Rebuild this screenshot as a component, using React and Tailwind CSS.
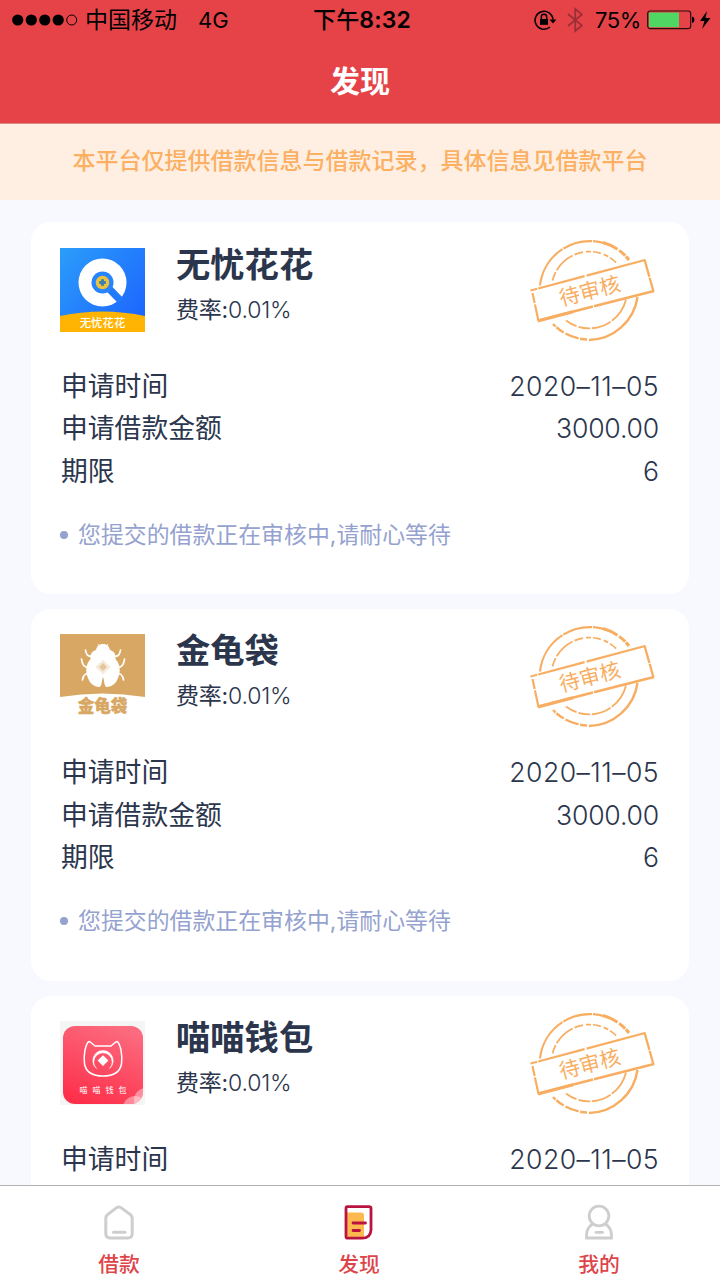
import React from 'react';

const WuyouLogo = () => (
  <svg viewBox="0 0 85 84" className="w-[85px] h-[84px]">
    <defs>
      <linearGradient id="wuyou" x1="0" y1="0" x2="1" y2="0.8">
        <stop offset="0" stopColor="#2b9dfb" />
        <stop offset="1" stopColor="#1d66fd" />
      </linearGradient>
    </defs>
    <rect width="85" height="84" fill="url(#wuyou)" />
    <circle cx="42.5" cy="34.5" r="24" fill="#fff" />
    <path d="M43 34.5 L61 53" stroke="#2379fc" strokeWidth="7.4" />
    <circle cx="42.5" cy="34.5" r="11" fill="#2784fc" />
    <circle cx="42.5" cy="34.5" r="6.8" fill="#ebc23c" />
    <path d="M42.5 31.2v6.6M39.2 34.5h6.6" stroke="#3f7fae" strokeWidth="3" />
    <path d="M0 68 Q42.5 59 85 68 V84 H0Z" fill="#ffb302" />
    <text x="42.5" y="78.5" textAnchor="middle" fontSize="11.4" fontWeight="500" fill="#fff">无忧花花</text>
  </svg>
);

const JinguiLogo = () => (
  <svg viewBox="0 0 85 84" className="w-[85px] h-[84px]">
    <path d="M0 0H85V63Q42.5 56 0 63Z" fill="#d7a763" />
    <g fill="none" stroke="#fff" strokeWidth="1.7" strokeLinecap="round">
      <path d="M31 22C28 23 26 20 25.5 16M29 33C24 34 22 30 21.5 25M30 39C25 39 23 42 22.5 46" />
      <path d="M55 22C58 23 60 20 60.5 16M57 33C62 34 64 30 64.5 25M56 39C61 39 63 42 63.5 46" />
      <path d="M40 12l-2-1.5M46 12l2-1.5" strokeWidth="1" />
    </g>
    <path d="M43 10C47 10 49 12 50 16C54 17 56 20 55.5 25C60 30 61 37 58 44C56 50 51 53 46.5 53C44 52 44.5 47 43 43C41.5 47 42 52 39.5 53C35 53 30 50 28 44C25 37 26 30 30.5 25C30 20 32 17 36 16C37 12 39 10 43 10Z" fill="#fff" />
    <path d="M43 25.5l7.5 7.5-7.5 7.5-7.5-7.5z" fill="#f5eadb" />
    <path d="M43 29l4 4-4 4-4-4z" fill="#e5c79b" />
    <text x="42.5" y="78" textAnchor="middle" fontSize="16.5" fontWeight="900" fill="#d7a763" stroke="#d7a763" strokeWidth="0.4">金龟袋</text>
  </svg>
);

const MiaoLogo = () => (
  <svg viewBox="0 0 85 84" className="w-[85px] h-[84px]">
    <defs>
      <linearGradient id="miao" x1="0.7" y1="0" x2="0.3" y2="1">
        <stop offset="0" stopColor="#fc6b7f" />
        <stop offset="1" stopColor="#fd304b" />
      </linearGradient>
      <clipPath id="miaoClip">
        <rect x="3" y="5" width="80" height="78" rx="12" />
      </clipPath>
    </defs>
    <rect width="85" height="84" fill="#f5f5f5" />
    <g clipPath="url(#miaoClip)">
      <rect x="3" y="5" width="80" height="78" fill="url(#miao)" />
      <circle cx="75" cy="87" r="12" fill="#fff" opacity="0.4" />
      <circle cx="86" cy="79" r="12" fill="#fff" opacity="0.4" />
    </g>
    <path d="M25 29C26 25 27 21 29 20.5C31 21 33 23.5 35 25H51C53 23.5 55 21 57 20.5C59 21 60 25 61 29C62 34 62 39 61.5 43C60 51 54 55 43 55C32 55 26 51 24.5 43C24 39 24 34 25 29Z" fill="none" stroke="#fff" strokeWidth="1.5" />
    <path d="M36.5 47.5A10.2 10.2 0 1 1 49.5 47.5A9.2 9.2 0 1 0 36.5 47.5Z" fill="#fff" stroke="#fff" strokeWidth="0.5" />
    <path d="M43 34.2l5.4 5.4-5.4 5.4-5.4-5.4z" fill="#fff" />
    <text x="43.5" y="71.5" textAnchor="middle" fontSize="8" letterSpacing="5" dx="2" fill="#fff">喵喵钱包</text>
  </svg>
);

const Stamp = () => (
  <svg viewBox="0 0 130 110" className="w-[130px] h-[110px]" fill="none" stroke="#f8ae62">
    <path d="M11 49.5A50 50 0 0 1 76 7.5" strokeWidth="2.2" strokeDasharray="44 1 30 1 40" />
    <path d="M74 6.5A50 50 0 0 1 100 24" strokeWidth="3" strokeDasharray="16 2 8 1 20" />
    <path d="M108.500 61A50 50 0 0 1 60 104" strokeWidth="2.4" />
    <path d="M58 103.5A50 50 0 0 1 24 88" strokeWidth="2.4" strokeDasharray="7 1.500 14 2 9 1" />
    <path d="M23.5 44.5A38 38 0 0 1 55 16" strokeWidth="1.8" strokeDasharray="9 2 22 2" />
    <path d="M57 15.7A38 38 0 0 1 88 27.5" strokeWidth="1.7" strokeDasharray="5 2 8 3" />
    <path d="M97 63.5A38 38 0 0 1 37 84.5" strokeWidth="1.8" strokeDasharray="26 1.5 20 1.5 12 2" />
    <path d="M1.5 54.5L116 24" strokeWidth="2.2" strokeDasharray="7 1 48 2 70" />
    <path d="M115.5 23.5L124.5 55.5" strokeWidth="2.3" strokeDasharray="18 1 20" />
    <path d="M125 55L9.5 84.5" strokeWidth="2.6" strokeDasharray="62 1 90" />
    <path d="M9.5 85L3.5 57" strokeWidth="2.2" strokeDasharray="17 1.5 16" />
    <path d="M9 85L44 75.7" strokeWidth="3.2" />
    <text x="60.8" y="62.3" transform="rotate(-14.5 60.8 55)" textAnchor="middle" fontSize="20.8" fill="#f8ae62" stroke="none">待审核</text>
  </svg>
);

const HomeIcon = () => (
  <svg viewBox="0 0 36 40" className="w-9 h-10" fill="none" stroke="#cecece" strokeWidth="3" strokeLinejoin="round">
    <path d="M16 4.4Q17.8 3.4 19.6 4.4L29.5 11.6Q31.2 13 31.2 15.6V30.6Q31.2 35 27 35H9Q4.8 35 4.8 30.6V15.6Q4.8 13 6.5 11.6Z" />
    <path d="M12.5 29.3H24" strokeLinecap="round" />
  </svg>
);

const DiscoverIcon = () => (
  <svg viewBox="0 0 36 40" className="w-9 h-10" fill="none" stroke="#b9143f" strokeWidth="2.8" strokeLinejoin="round">
    <path d="M6 9.5H20Q23 9.5 23 12.5V35H6Z" fill="#fbb950" stroke="none" />
    <path d="M6.5 3.7H28Q30 3.7 30 5.5V27Q29.5 35.2 21 35.2H6.5Q5 35.2 5 33.5V5.5Q5 3.7 6.5 3.7Z" />
    <path d="M12 20H24.5M12 27.5H18.5" strokeLinecap="round" />
  </svg>
);

const MineIcon = () => (
  <svg viewBox="0 0 36 40" className="w-9 h-10" fill="none" stroke="#cecece" strokeWidth="2.8">
    <circle cx="18" cy="13" r="9.8" />
    <path d="M11.5 21Q5.5 25 5.5 32.5V35H30.5V32.5Q30.5 25 24.5 21" />
    <path d="M15 29.3H21.5" strokeLinecap="round" />
  </svg>
);

const loans = [
  { name: '无忧花花', logo: WuyouLogo },
  { name: '金龟袋', logo: JinguiLogo },
  { name: '喵喵钱包', logo: MiaoLogo }
];

const rows = [
  { label: '申请时间', value: '2020–11–05', spacing: 'tracking-[0.45px]' },
  { label: '申请借款金额', value: '3000.00', spacing: 'tracking-[-0.2px]' },
  { label: '期限', value: '6', spacing: '' }
];

const tabs = [
  { label: '借款', icon: HomeIcon },
  { label: '发现', icon: DiscoverIcon },
  { label: '我的', icon: MineIcon }
];

const StatusBar = () => (
  <div className="grid grid-cols-[1fr_auto_1fr] items-center h-10 pl-3 pr-2 text-black text-[23px] leading-10">
    <div className="flex items-center">
      <svg viewBox="0 0 66 12" className="w-[66px] h-3">
        <circle cx="5.7" cy="6" r="5.6" />
        <circle cx="19.3" cy="6" r="5.6" />
        <circle cx="32.8" cy="6" r="5.6" />
        <circle cx="46.2" cy="6" r="5.6" />
        <circle cx="59.7" cy="6" r="5" fill="none" stroke="#000" />
      </svg>
      <span className="ml-[7px]">中国移动</span>
      <span className="ml-[21px] text-[22px]">4G</span>
    </div>
    <div className="font-semibold tracking-[0.15px] pl-px pr-px">
      <span className="font-medium">下午</span>8:32
    </div>
    <div className="flex items-center justify-end">
      <svg viewBox="0 0 24 22" className="w-6 h-[22px] mr-2.5" fill="none" stroke="#000" strokeWidth="1.5">
        <path d="M17 18A9 9 0 1 1 20 10.5" />
        <path d="M16.5 10.5H23.5L20 14.5Z" fill="#000" stroke="none" />
        <rect x="7" y="10" width="8" height="5.8" fill="#000" stroke="none" />
        <path d="M8.3 10V8A2.7 2.7 0 0 1 13.7 8V10" />
      </svg>
      <svg viewBox="0 0 16 26" className="w-4 h-[26px] mr-[12px]" fill="none" stroke="#9b2f36" strokeWidth="1.8">
        <path d="M1 7L15 18.5L8.2 24V2L15 7.5L1 19" />
      </svg>
      <span className="text-[22px] tracking-[-0.4px] mr-1.5">75%</span>
      <svg viewBox="0 0 65 22" className="w-[65px] h-[22px]">
        <rect x="0.7" y="2" width="43" height="17.6" rx="2.5" fill="none" stroke="#2c0b0d" strokeWidth="1.2" />
        <rect x="2" y="3.5" width="30" height="14.7" fill="#50d763" />
        <path d="M45 7.5Q47.5 8 47.5 10.8T45 14Z" />
        <path d="M60 2L53 12H57.5L55 20L63.5 9H58.5Z" />
      </svg>
    </div>
  </div>
);

const LoanCard = ({ loan }) => {
  const Logo = loan.logo;
  return (
    <div className="h-[372px] shrink-0 bg-white rounded-[20px] pl-[29px] pr-[30px] pt-[25.5px]">
      <div className="flex h-[117px]">
        <Logo />
        <div className="ml-[31px] -mt-2 flex-1 text-[#2b364d]">
          <h2 className="text-[34.3px] leading-[50px] font-bold">{loan.name}</h2>
          <p className="text-[23px] leading-10 tracking-[-0.2px]">
            费率:<span className="font-[350]">0.01%</span>
          </p>
        </div>
        <div className="-mt-[12px]">
          <Stamp />
        </div>
      </div>
      <div className="text-[26.6px] leading-[42.5px] text-[#2b364d]">
        {rows.map((row) => (
          <div key={row.label} className="flex justify-between">
            <span className="text-[26.8px] pl-px">{row.label}</span>
            <span className={`font-[350] ${row.spacing}`}>{row.value}</span>
          </div>
        ))}
      </div>
      <div className="mt-[22.5px] flex items-center text-[22.9px] leading-10 text-[#95a2cf]">
        <span className="w-2 h-2 rounded-full bg-[#95a2cf] mr-2.5" />
        您提交的借款正在审核中,请耐心等待
      </div>
    </div>
  );
};

const App = () => {
  return (
    <div className="w-[720px] h-[1280px] flex flex-col overflow-hidden bg-[#f8f9fe] font-[Inter,'Noto_Sans_CJK_SC',sans-serif]">
      <header className="h-[124px] shrink-0 bg-[#e64349] border-b border-[#dc8a86]">
        <StatusBar />
        <h1 className="text-center text-white text-[30px] leading-[83px] font-bold">发现</h1>
      </header>
      <div className="h-[75.5px] shrink-0 bg-[#ffefe2] text-center text-[23px] leading-[75px] font-medium text-[#fbb063]">
        本平台仅提供借款信息与借款记录，具体信息见借款平台
      </div>

      <main className="flex-1 min-h-0 overflow-hidden flex flex-col gap-[14.8px] px-[31px] pt-[22.5px]">
        {loans.map((loan) => (
          <LoanCard key={loan.name} loan={loan} />
        ))}
      </main>

      <nav className="h-[95px] shrink-0 bg-white border-t border-[#b2b2b2]">
        <div className="w-[720px] -ml-px grid grid-cols-3">
          {tabs.map((tab) => {
            const Icon = tab.icon;
            return (
              <div key={tab.label} className="flex flex-col items-center pt-[17px] text-[#de4449]">
                <Icon />
                <span className="mt-[7px] text-[20.8px] leading-[30px] font-medium">{tab.label}</span>
              </div>
            );
          })}
        </div>
      </nav>
    </div>
  );
};

export default App;
